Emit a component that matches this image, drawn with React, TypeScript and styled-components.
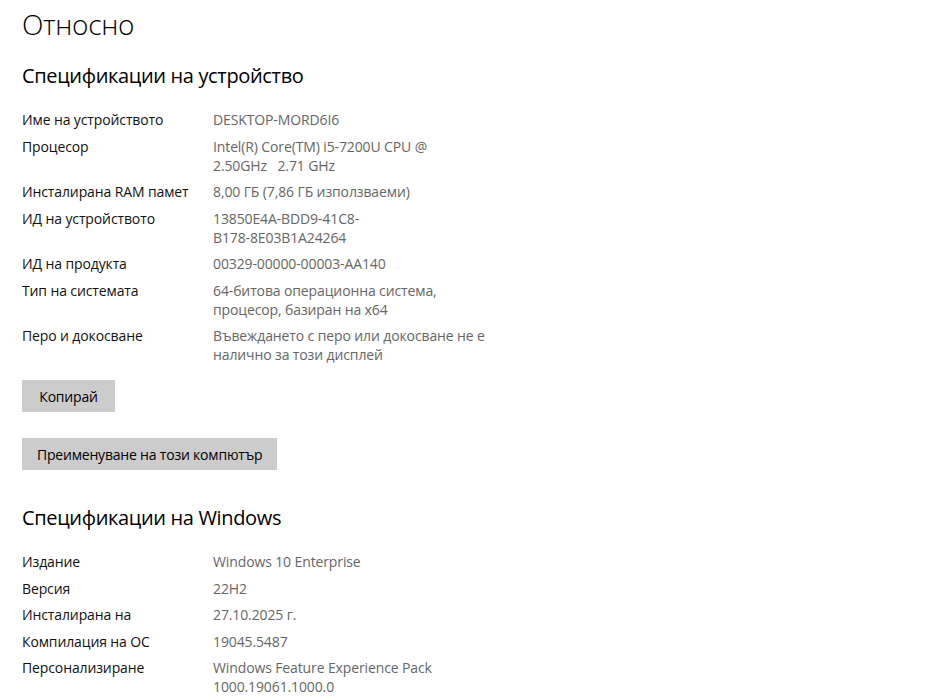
import React from "react";
import styled, { createGlobalStyle } from "styled-components";

const GlobalStyle = createGlobalStyle`
  html, body {
    margin: 0;
    padding: 0;
    background: #ffffff;
  }
  body {
    font-family: "Open Sans", "Noto Sans", "Liberation Sans", sans-serif;
    color: #000000;
  }
`;

const Page = styled.div`
  padding: 4px 22px 0;
  width: 952px;
  height: 700px;
  box-sizing: border-box;
  overflow: hidden;
`;

const Title = styled.h1`
  margin: 0;
  font-size: 28px;
  font-weight: 300;
  line-height: 40px;
  letter-spacing: -0.3px;
`;

const SectionTitle = styled.h2<{ $gap: number }>`
  margin: ${(p) => p.$gap}px 0 0;
  font-size: 20px;
  font-weight: 400;
  line-height: 28px;
  letter-spacing: -0.35px;
`;

const SpecList = styled.div`
  display: flex;
  flex-direction: column;
  gap: 7.5px;
  margin-top: 20px;
`;

const SpecRow = styled.div`
  display: grid;
  grid-template-columns: 191px 1fr;
  font-size: 14px;
  line-height: 19px;
  letter-spacing: -0.12px;
`;

const Label = styled.div`
  color: #111111;
`;

const Value = styled.div`
  color: #666666;
`;

const Line = styled.div`
  white-space: pre;
`;

const Button = styled.button<{ $gap: number }>`
  display: block;
  margin-top: ${(p) => p.$gap}px;
  min-width: 93px;
  height: 32px;
  padding: 0 15px;
  border: none;
  background: #cccccc;
  color: #000000;
  font-family: inherit;
  font-size: 14px;
  letter-spacing: -0.2px;
  cursor: pointer;
`;

type Spec = { label: string; value: string[] };

const deviceSpecs: Spec[] = [
  { label: "Име на устройството", value: ["DESKTOP-MORD6I6"] },
  {
    label: "Процесор",
    value: ["Intel(R) Core(TM) i5-7200U CPU @", "2.50GHz   2.71 GHz"],
  },
  { label: "Инсталирана RAM памет", value: ["8,00 ГБ (7,86 ГБ използваеми)"] },
  {
    label: "ИД на устройството",
    value: ["13850E4A-BDD9-41C8-", "B178-8E03B1A24264"],
  },
  { label: "ИД на продукта", value: ["00329-00000-00003-AA140"] },
  {
    label: "Тип на системата",
    value: ["64-битова операционна система,", "процесор, базиран на x64"],
  },
  {
    label: "Перо и докосване",
    value: ["Въвеждането с перо или докосване не е", "налично за този дисплей"],
  },
];

const windowsSpecs: Spec[] = [
  { label: "Издание", value: ["Windows 10 Enterprise"] },
  { label: "Версия", value: ["22H2"] },
  { label: "Инсталирана на", value: ["27.10.2025 г."] },
  { label: "Компилация на ОС", value: ["19045.5487"] },
  {
    label: "Персонализиране",
    value: ["Windows Feature Experience Pack", "1000.19061.1000.0"],
  },
];

const SpecTable = ({ specs }: { specs: Spec[] }) => (
  <SpecList>
    {specs.map((s) => (
      <SpecRow key={s.label}>
        <Label>{s.label}</Label>
        <Value>
          {s.value.map((v, i) => (
            <Line key={i}>{v}</Line>
          ))}
        </Value>
      </SpecRow>
    ))}
  </SpecList>
);

export default function App() {
  return (
    <>
      <GlobalStyle />
      <Page>
        <Title>Относно</Title>
        <SectionTitle $gap={18}>Спецификации на устройство</SectionTitle>
        <SpecTable specs={deviceSpecs} />
        <Button $gap={16}>Копирай</Button>
        <Button $gap={26}>Преименуване на този компютър</Button>
        <SectionTitle $gap={34}>Спецификации на Windows</SectionTitle>
        <SpecTable specs={windowsSpecs} />
      </Page>
    </>
  );
}
